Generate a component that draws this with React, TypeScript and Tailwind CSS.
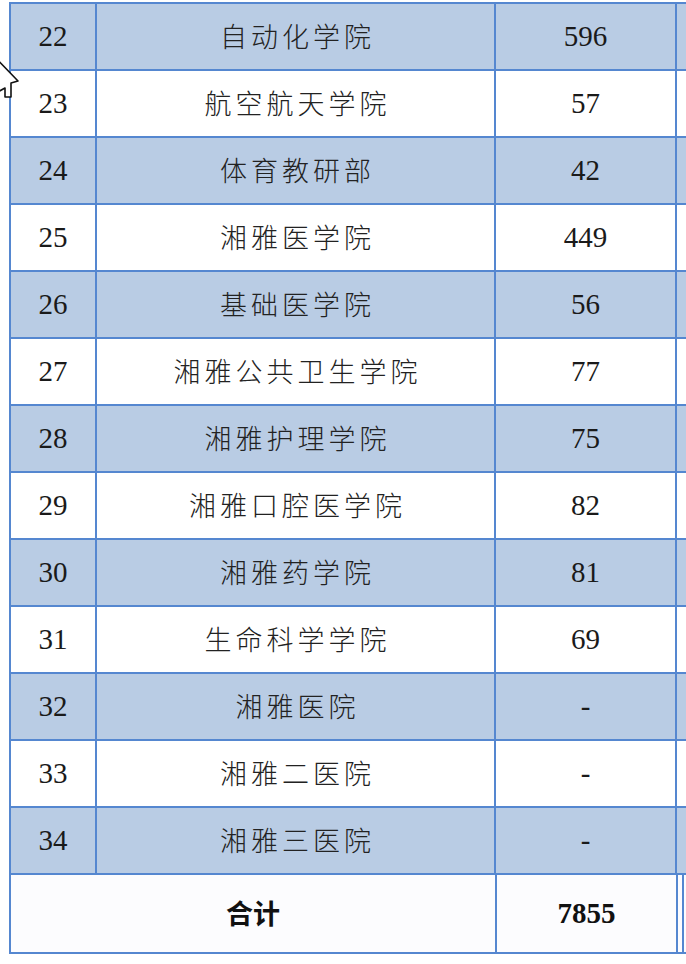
import React from 'react';

const rows = [
  { no: '22', name: '自动化学院', count: '596' },
  { no: '23', name: '航空航天学院', count: '57' },
  { no: '24', name: '体育教研部', count: '42' },
  { no: '25', name: '湘雅医学院', count: '449' },
  { no: '26', name: '基础医学院', count: '56' },
  { no: '27', name: '湘雅公共卫生学院', count: '77' },
  { no: '28', name: '湘雅护理学院', count: '75' },
  { no: '29', name: '湘雅口腔医学院', count: '82' },
  { no: '30', name: '湘雅药学院', count: '81' },
  { no: '31', name: '生命科学学院', count: '69' },
  { no: '32', name: '湘雅医院', count: '-' },
  { no: '33', name: '湘雅二医院', count: '-' },
  { no: '34', name: '湘雅三医院', count: '-' },
];

export default function App() {
  return (
    <div className="relative w-[686px] h-[964px] overflow-hidden bg-white">
      <div className="pt-[2px] pl-[9px]">
        <div className="w-[700px] border-t-2 border-l-2 border-[#5587d0]">
          {rows.map((r, i) => (
            <div
              key={r.no}
              className={
                'flex h-[67px] border-b-2 border-[#5587d0] ' +
                (i % 2 === 0 ? 'bg-[#b9cce4]' : 'bg-white')
              }
            >
              <div className="w-[86px] shrink-0 border-r-2 border-[#5587d0] flex items-center justify-center text-[29px] text-[#1a1a1a] font-serif">
                <span className="font-['Liberation_Serif','Times_New_Roman','DejaVu_Serif',serif]">{r.no}</span>
              </div>
              <div className="w-[399px] shrink-0 border-r-2 border-[#5587d0] flex items-center justify-center text-[27px] font-light tracking-[4px] text-[#222]">
                <span className="pl-[4px] font-['Noto_Sans_CJK_SC',sans-serif]">{r.name}</span>
              </div>
              <div className="w-[181px] shrink-0 border-r-2 border-[#5587d0] flex items-center justify-center text-[29px] text-[#1a1a1a] font-serif">
                <span className="font-['Liberation_Serif','Times_New_Roman','DejaVu_Serif',serif]">{r.count}</span>
              </div>
              <div className="flex-1" />
            </div>
          ))}
          <div className="flex h-[79px] border-b-2 border-[#5587d0] bg-[#fcfcfe]">
            <div className="w-[486px] shrink-0 border-r-2 border-[#5587d0] flex items-center justify-center text-[27px] font-bold text-[#111]">
              <span className="font-['Noto_Sans_CJK_SC',sans-serif]">合计</span>
            </div>
            <div className="w-[181px] shrink-0 border-r-2 border-[#5587d0] flex items-center justify-center text-[29px] font-bold text-[#111] font-serif">
              <span className="font-['Liberation_Serif','Times_New_Roman','DejaVu_Serif',serif]">7855</span>
            </div>
            <div className="w-[6px] shrink-0 border-r-2 border-[#5587d0]" />
          </div>
        </div>
      </div>
      <svg className="absolute left-0 top-[48px]" width="30" height="56" viewBox="0 0 30 56">
        <path
          d="M -12 2 L 18 33 L 11 35 L 11 49 L 5 49 L 5 40 L -4 45 Z"
          fill="#fff"
          stroke="#111"
          strokeWidth="1.6"
          strokeLinejoin="round"
        />
      </svg>
    </div>
  );
}
